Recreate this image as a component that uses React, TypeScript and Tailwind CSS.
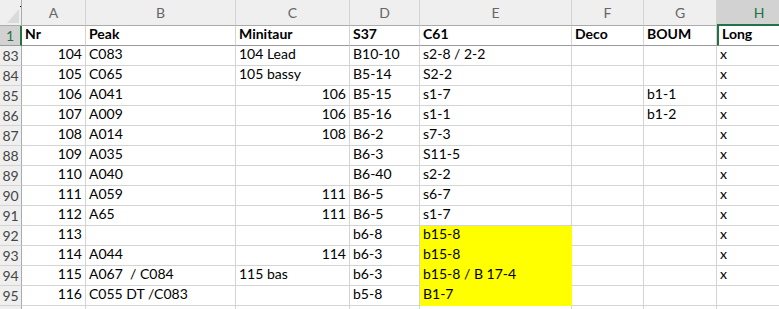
const COLS = [
  { key: 'A', w: 'w-[64px]' },
  { key: 'B', w: 'w-[150px]' },
  { key: 'C', w: 'w-[114px]' },
  { key: 'D', w: 'w-[70px]' },
  { key: 'E', w: 'w-[152px]' },
  { key: 'F', w: 'w-[72px]' },
  { key: 'G', w: 'w-[73px]' },
  { key: 'H', w: 'w-[84px]' },
];

type Row = {
  n: number;
  cells: (string | number)[];
  yellow?: boolean;
};

const ROWS: Row[] = [
  { n: 83, cells: [104, 'C083', '104 Lead', 'B10-10', 's2-8 / 2-2', '', '', 'x'] },
  { n: 84, cells: [105, 'C065', '105 bassy', 'B5-14', 'S2-2', '', '', 'x'] },
  { n: 85, cells: [106, 'A041', 106, 'B5-15', 's1-7', '', 'b1-1', 'x'] },
  { n: 86, cells: [107, 'A009', 106, 'B5-16', 's1-1', '', 'b1-2', 'x'] },
  { n: 87, cells: [108, 'A014', 108, 'B6-2', 's7-3', '', '', 'x'] },
  { n: 88, cells: [109, 'A035', '', 'B6-3', 'S11-5', '', '', 'x'] },
  { n: 89, cells: [110, 'A040', '', 'B6-40', 's2-2', '', '', 'x'] },
  { n: 90, cells: [111, 'A059', 111, 'B6-5', 's6-7', '', '', 'x'] },
  { n: 91, cells: [112, 'A65', 111, 'B6-5', 's1-7', '', '', 'x'] },
  { n: 92, cells: [113, '', '', 'b6-8', 'b15-8', '', '', 'x'], yellow: true },
  { n: 93, cells: [114, 'A044', 114, 'b6-3', 'b15-8', '', '', 'x'], yellow: true },
  { n: 94, cells: [115, 'A067  / C084', '115 bas', 'b6-3', 'b15-8 / B 17-4', '', '', 'x'], yellow: true },
  { n: 95, cells: [116, 'C055 DT /C083', '', 'b5-8', 'B1-7', '', '', ''], yellow: true },
];

const HEAD = ['Nr', 'Peak', 'Minitaur', 'S37', 'C61', 'Deco', 'BOUM', 'Long'];

export default function App() {
  return (
    <div className="w-[779px] h-[309px] overflow-hidden bg-white font-['Lato',sans-serif] text-[14px] text-black">
      {/* column letters */}
      <div className="flex h-[26px]">
        <div className="relative w-[22px] shrink-0 bg-[#efefef] border-b border-r border-[#ababab]">
          <svg className="absolute right-[2px] bottom-[2px]" width="12" height="14" viewBox="0 0 12 14">
            <polygon points="12,0 12,14 0,14" fill="#dadada" />
          </svg>
          <span className="absolute right-0 top-[6px] w-px h-px bg-black" />
        </div>
        {COLS.map((c) =>
          c.key === 'H' ? (
            <div
              key={c.key}
              className={`${c.w} shrink-0 flex items-center justify-center bg-[#d2d2d2] border-b-2 border-[#217346] text-[#217346] text-[14px]`}
            >
              {c.key}
            </div>
          ) : (
            <div
              key={c.key}
              className={`${c.w} shrink-0 flex items-center justify-center bg-[#efefef] border-r border-r-[#d4d4d4] border-b border-b-[#ababab] text-[#666666] text-[14px]`}
            >
              {c.key}
            </div>
          )
        )}
      </div>

      {/* frozen row 1 */}
      <div className="flex h-[20px]">
        <div className="w-[22px] shrink-0 flex items-center justify-center bg-[#d2d2d2] border-r-2 border-r-[#217346] border-b border-b-[#9b9b9b] text-[#217346]">
          1
        </div>
        {HEAD.map((h, i) => (
          <div
            key={h}
            className={`${COLS[i].w} shrink-0 flex items-end pl-[3px] pb-px font-bold border-b border-b-[#9b9b9b] ${
              i === 7 ? 'border-l-2 border-l-[#217346]' : 'border-r border-r-[#d4d4d4]'
            }`}
          >
            {h}
          </div>
        ))}
      </div>

      {ROWS.map((r) => (
        <div key={r.n} className="flex h-[20px]">
          <div className="w-[22px] shrink-0 flex items-center justify-center bg-[#efefef] border-r border-r-[#ababab] border-b border-b-[#d4d4d4] text-[#444444]">
            {r.n}
          </div>
          {r.cells.map((v, i) => {
            const num = typeof v === 'number';
            const yellow = r.yellow && i === 4;
            return (
              <div
                key={i}
                className={`${COLS[i].w} shrink-0 flex items-end pb-px px-[3px] whitespace-pre border-r border-b ${
                  num ? 'justify-end' : 'justify-start'
                } ${yellow ? 'bg-[#ffff00] border-[#ffff00]' : 'border-[#d4d4d4]'}`}
              >
                {v}
              </div>
            );
          })}
        </div>
      ))}

      {/* next row, mostly out of view */}
      <div className="flex h-[20px]">
        <div className="w-[22px] shrink-0 bg-[#efefef] border-r border-r-[#ababab]" />
        {COLS.map((c) => (
          <div key={c.key} className={`${c.w} shrink-0 border-r border-[#d4d4d4]`} />
        ))}
      </div>
    </div>
  );
}
